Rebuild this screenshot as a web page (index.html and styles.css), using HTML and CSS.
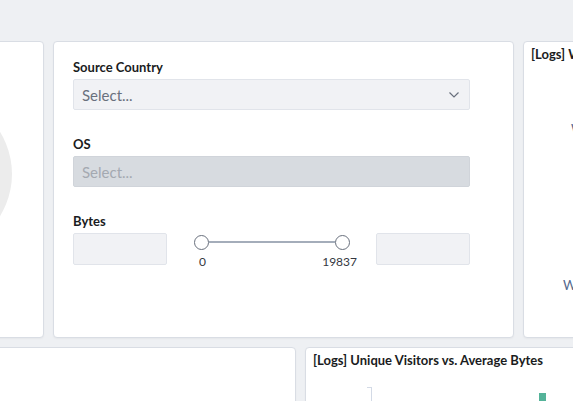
FILE: index.html
```html
<!DOCTYPE html>
<html>
<head>
<meta charset="utf-8">
<link rel="stylesheet" href="styles.css">
</head>
<body>
<div class="dash">
  <div class="row row-top">
    <div class="panel panel-pie">
      <div class="pie"></div>
    </div>
    <div class="panel panel-controls">
      <div class="field">
        <div class="label">Source Country</div>
        <div class="select">
          <span>Select...</span>
          <svg class="chev" width="12" height="8" viewBox="0 0 12 8"><path d="M1.5 1.5 L6 6 L10.5 1.5" fill="none" stroke="#69707d" stroke-width="1.2"/></svg>
        </div>
      </div>
      <div class="field">
        <div class="label">OS</div>
        <div class="select disabled"><span>Select...</span></div>
      </div>
      <div class="field">
        <div class="label">Bytes</div>
        <div class="range">
          <div class="num"></div>
          <div class="slider">
            <div class="track">
              <span class="thumb"></span>
              <span class="line"></span>
              <span class="thumb"></span>
            </div>
            <div class="ticks"><span>0</span><span>19837</span></div>
          </div>
          <div class="num"></div>
        </div>
      </div>
    </div>
    <div class="panel panel-cloud">
      <div class="title">[Logs] Web Traffic</div>
      <span class="word w1">Windows</span>
      <span class="word w2">Win 8</span>
    </div>
  </div>
  <div class="row row-bottom">
    <div class="panel"></div>
    <div class="panel panel-chart">
      <div class="title">[Logs] Unique Visitors vs. Average Bytes</div>
      <div class="chart">
        <span class="axis"></span>
        <span class="bar"></span>
      </div>
    </div>
  </div>
</div>
</body>
</html>
```
FILE: styles.css
```css
html, body {
  margin: 0;
  padding: 0;
  background: #eef0f3;
  overflow: hidden;
  width: 573px;
  height: 401px;
  font-family: "Lato", "Liberation Sans", sans-serif;
  color: #1a1c21;
}
.dash {
  margin-left: -200px;
  padding-top: 41px;
  width: 1100px;
  display: flex;
  flex-direction: column;
  gap: 9px;
}
.row {
  display: grid;
  gap: 9px;
}
.row-top {
  grid-template-columns: 244px 461px 300px;
  height: 297px;
}
.row-bottom {
  grid-template-columns: 496px 400px;
  height: 200px;
}
.panel {
  background: #fff;
  border: 1px solid #d9dde4;
  border-radius: 4px;
  box-shadow: 0 1px 2px rgba(0,0,0,0.04);
  box-sizing: border-box;
  position: relative;
  overflow: hidden;
}
.pie {
  position: absolute;
  left: 51px;
  top: 52px;
  width: 160px;
  height: 160px;
  border-radius: 50%;
  background: #ececec;
}
.panel-controls {
  padding: 17px 43px 0 19px;
  display: flex;
  flex-direction: column;
  gap: 26px;
}
.field {
  display: flex;
  flex-direction: column;
  gap: 4px;
}
.label {
  font-size: 13px;
  font-weight: 700;
  line-height: 16px;
}
.select {
  height: 31px;
  box-sizing: border-box;
  background: #f1f2f5;
  border: 1px solid #e1e4ea;
  border-radius: 2px;
  display: flex;
  align-items: center;
  justify-content: space-between;
  padding: 0 9px 0 8px;
  font-size: 15px;
  color: #69707d;
}
.select.disabled {
  background: #d7dbe0;
  border-color: #d0d4da;
  color: #a4a9b1;
}
.chev { margin-top: 1px; }
.range {
  display: flex;
  align-items: flex-start;
}
.num {
  width: 94px;
  height: 32px;
  box-sizing: border-box;
  background: #f1f2f5;
  border: 1px solid #e1e4ea;
  border-radius: 2px;
  flex: none;
}
.slider {
  flex: 1;
  padding: 0 26px 0 27px;
}
.track {
  display: flex;
  align-items: center;
  height: 18px;
}
.thumb {
  width: 13px;
  height: 13px;
  border: 1.5px solid #69707d;
  border-radius: 50%;
  background: #fff;
  flex: none;
}
.line {
  flex: 1;
  height: 2px;
  background: #a4adba;
}
.ticks {
  display: flex;
  justify-content: space-between;
  font-size: 12px;
  line-height: 14px;
  margin-top: 4px;
  color: #343741;
  padding-left: 5px;
  margin-right: -7px;
}
.title {
  font-size: 13px;
  font-weight: 700;
  line-height: 16px;
  padding: 4px 7px 5px;
  white-space: nowrap;
}
.word {
  position: absolute;
  font-size: 13px;
  color: #54698d;
  white-space: nowrap;
}
.w1 { left: 47px; top: 79px; }
.w2 { left: 39px; top: 235px; }
.chart {
  position: relative;
  height: 150px;
}
.axis {
  position: absolute;
  left: 61px;
  top: 14px;
  width: 4px;
  height: 40px;
  border-top: 1px solid #d3dae6;
  border-right: 1px solid #d3dae6;
}
.bar {
  position: absolute;
  left: 233px;
  top: 20px;
  width: 7px;
  height: 40px;
  background: #54b399;
}
```
